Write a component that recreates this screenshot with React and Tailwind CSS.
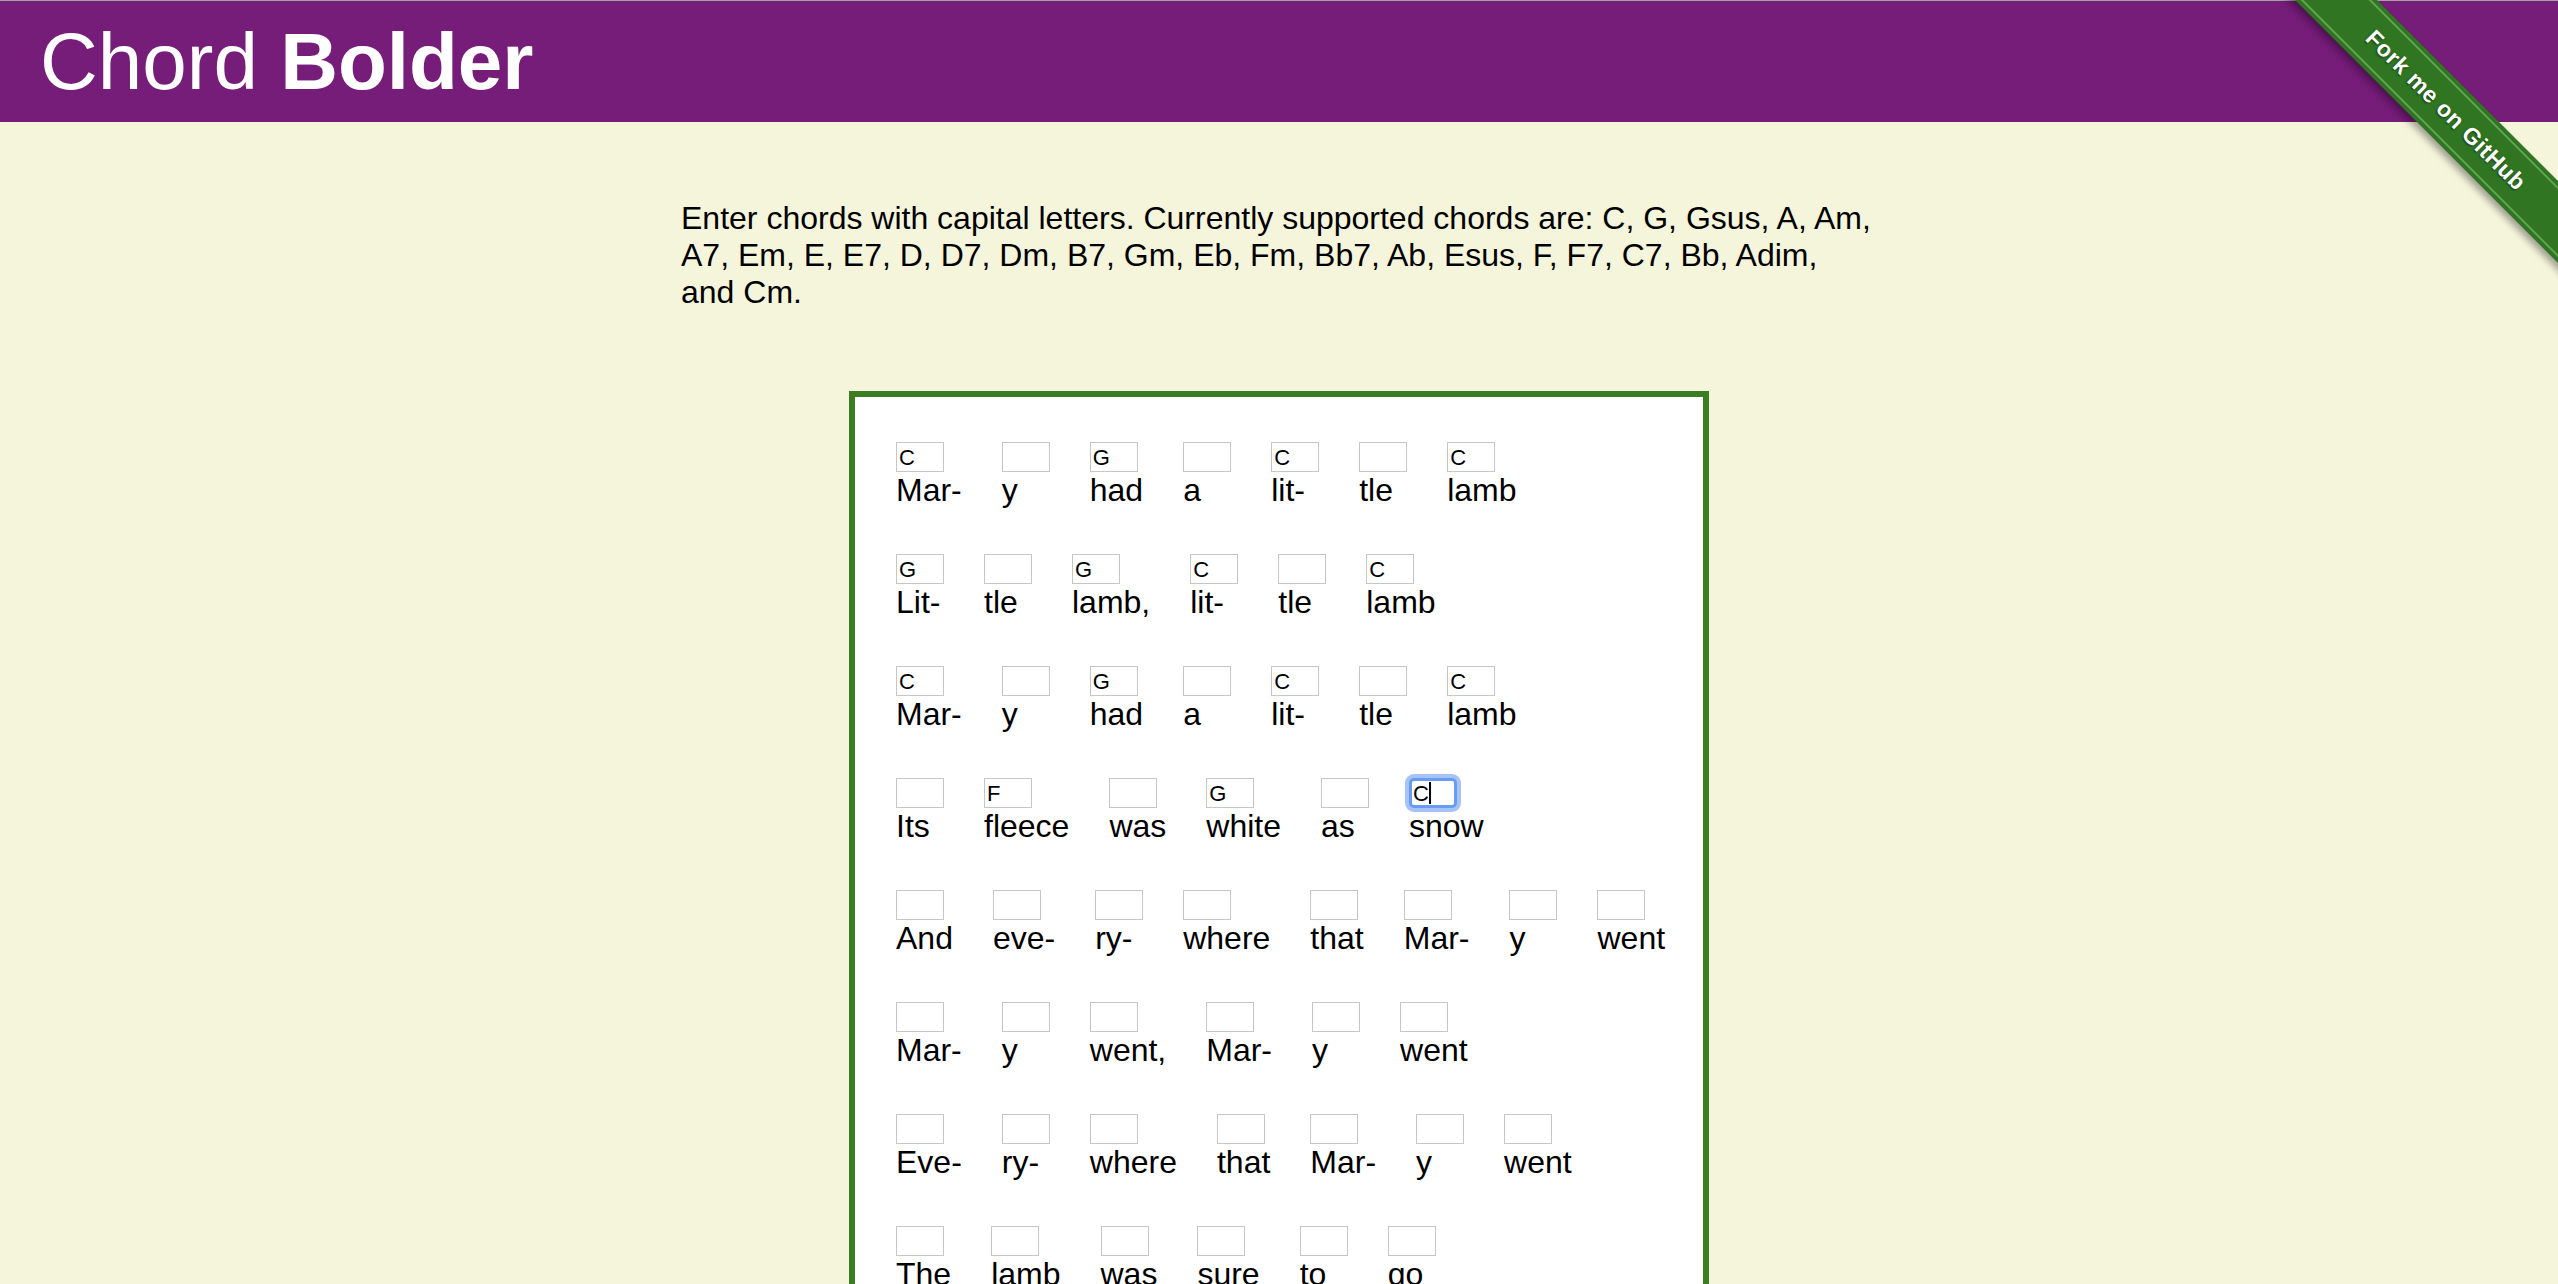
import React from "react";

// each line of the song: [chord, syllable], third item marks the focused box
const song = [
  [["C", "Mar-"], ["", "y"], ["G", "had"], ["", "a"], ["C", "lit-"], ["", "tle"], ["C", "lamb"]],
  [["G", "Lit-"], ["", "tle"], ["G", "lamb,"], ["C", "lit-"], ["", "tle"], ["C", "lamb"]],
  [["C", "Mar-"], ["", "y"], ["G", "had"], ["", "a"], ["C", "lit-"], ["", "tle"], ["C", "lamb"]],
  [["", "Its"], ["F", "fleece"], ["", "was"], ["G", "white"], ["", "as"], ["C", "snow", true]],
  [["", "And"], ["", "eve-"], ["", "ry-"], ["", "where"], ["", "that"], ["", "Mar-"], ["", "y"], ["", "went"]],
  [["", "Mar-"], ["", "y"], ["", "went,"], ["", "Mar-"], ["", "y"], ["", "went"]],
  [["", "Eve-"], ["", "ry-"], ["", "where"], ["", "that"], ["", "Mar-"], ["", "y"], ["", "went"]],
  [["", "The"], ["", "lamb"], ["", "was"], ["", "sure"], ["", "to"], ["", "go"]],
];

const ChordBox = ({ chord, focused }) => {
  if (focused) {
    return (
      <div className="flex items-center w-[48px] h-[30px] bg-white border-[3px] border-[#6a9bf2] rounded-[5px] shadow-[0_0_0_4px_rgba(106,155,242,0.6)] pl-[1px] text-[22px] text-black">
        <span>{chord}</span>
        <span className="w-[2px] h-[22px] bg-black" />
      </div>
    );
  }
  return (
    <input
      type="text"
      defaultValue={chord}
      className="block w-[48px] h-[30px] bg-white border border-[#c6c6c6] px-[2px] text-[22px] text-black outline-none"
    />
  );
};

const Ribbon = () => (
  <div className="absolute top-0 right-0 w-[298px] h-[298px] overflow-hidden pointer-events-none">
    <div className="absolute left-[-34px] top-[81px] w-[440px] h-[58px] rotate-45 bg-[#2f7522] shadow-[0_5px_7px_rgba(0,0,0,0.35)] flex items-center justify-center">
      <div className="absolute inset-x-0 top-[4px] bottom-[4px] border-y-2 border-[#63a253]" />
      <span className="text-white font-bold text-[23px] tracking-[0.5px] [text-shadow:0_1px_2px_rgba(0,0,0,0.6)]">
        Fork me on GitHub
      </span>
    </div>
  </div>
);

export default function App() {
  return (
    <div className="relative h-[1284px] overflow-hidden bg-[#f5f5dc] font-['Liberation_Sans',Arial,sans-serif] text-black">
      <header className="h-[122px] border-t border-[#a3a3a3] bg-[#761c79] flex items-center pl-[40px]">
        <h1 className="text-white text-[80px] leading-[normal] font-normal">
          Chord <b className="font-bold">Bolder</b>
        </h1>
      </header>

      <p className="w-[1196px] mx-auto mt-[78px] text-[32px] leading-[normal]">
        Enter chords with capital letters. Currently supported chords are: C, G, Gsus, A, Am, A7, Em, E, E7, D, D7,
        Dm, B7, Gm, Eb, Fm, Bb7, Ab, Esus, F, F7, C7, Bb, Adim, and Cm.
      </p>

      <div className="w-[860px] mx-auto mt-[80px] bg-white border-[6px] border-[#3b7d23] pt-[45px] pl-[41px] pb-[45px] flex flex-col gap-[45px]">
        {song.map((line, i) => (
          <div key={i} className="flex items-start gap-x-[40px]">
            {line.map(([chord, word, focused], j) => (
              <div key={j} className="flex flex-col items-start">
                <ChordBox chord={chord} focused={focused} />
                <span className="text-[32px] leading-[normal] whitespace-nowrap">{word}</span>
              </div>
            ))}
          </div>
        ))}
      </div>

      <Ribbon />
    </div>
  );
}
